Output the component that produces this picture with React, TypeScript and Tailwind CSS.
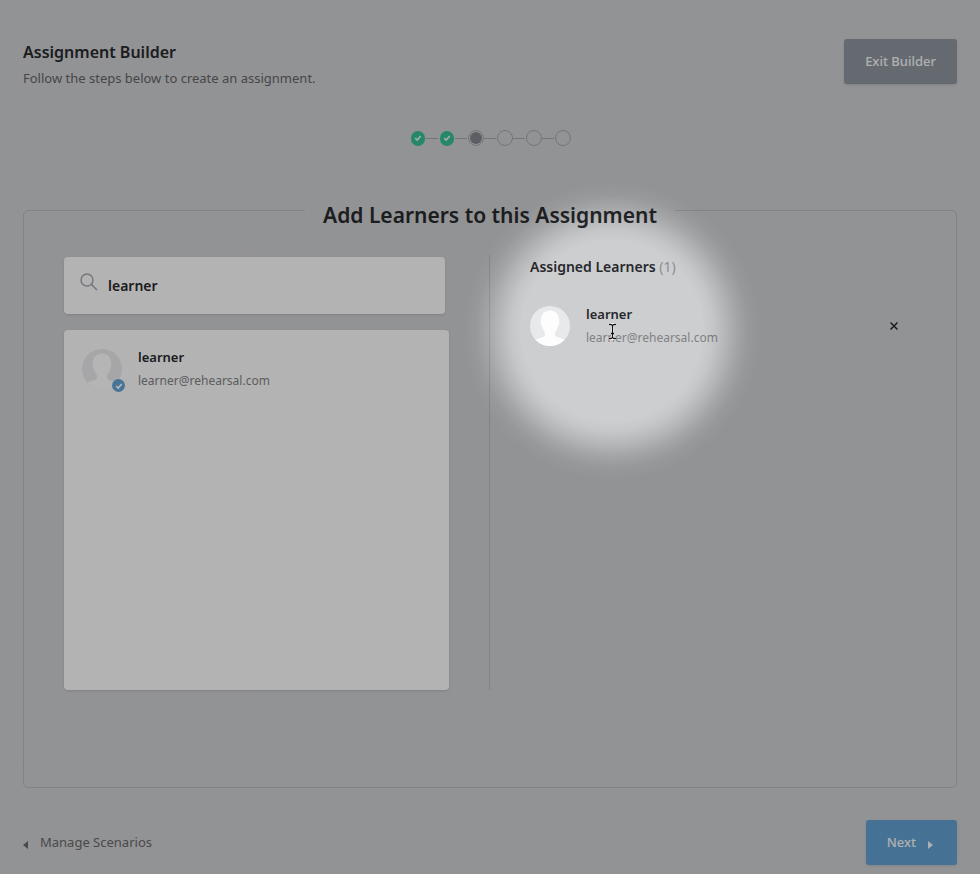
import { useState } from "react";

const steps = ["done", "done", "current", "todo", "todo", "todo"];

function Check({ className }: { className: string }) {
  return (
    <svg viewBox="0 0 16 16" className={className} fill="none" stroke="currentColor" strokeWidth="3.4">
      <path d="M2.500 8.200l3.900 3.800L13.500 4" />
    </svg>
  );
}

function Avatar() {
  return (
    <svg viewBox="0 0 40 40" className="block size-10 rounded-full" aria-hidden="true">
      <rect width="40" height="40" fill="#e8e9eb" />
      <path
        fill="#fdfdfd"
        d="M20 4.500c5.600 0 9 3.600 9 9.200 0 1 .6 1.600.3 3.200-.3 1.300-.8 1.800-1.100 2.900-.6 3-2 5-3.200 6.600v2.300c0 1.500 1.500 2.100 4.500 3.100 3 .9 5.500 1.700 7.500 3.600V40h-34v-4.600c2-1.900 4.500-2.700 7.500-3.600 3-1 4.500-1.600 4.500-3.100v-2.300c-1.200-1.600-2.600-3.600-3.200-6.600-.3-1.100-.8-1.600-1.100-2.900-.3-1.600.3-2.200.3-3.200 0-5.600 3.400-9.200 9-9.200z"
      />
    </svg>
  );
}

function Steps() {
  return (
    <ol className="flex items-center justify-center" aria-label="Progress">
      {steps.map((step, i) => (
        <li key={i} className="flex items-center">
          {i > 0 && <span className="h-px w-3 bg-[#a3a4a8]" />}
          <span className="flex h-4 w-[17px] items-center justify-center">
            {step === "done" && (
              <span className="flex h-[15px] w-3.5 items-center justify-center rounded-full bg-[#36be92] text-[#e4f3ee]">
                <Check className="size-2" />
              </span>
            )}
            {step === "current" && (
              <span className="flex size-4 items-center justify-center rounded-full border border-[#a3a4a8]">
                <span className="size-3 rounded-full bg-[#83848c]" />
              </span>
            )}
            {step === "todo" && <span className="size-4 rounded-full border border-[#a3a4a8]" />}
          </span>
        </li>
      ))}
    </ol>
  );
}

function Person() {
  return (
    <div>
      <p className="text-[13px] leading-6 font-semibold text-[#27282b]">learner</p>
      <p className="text-xs leading-6 text-[#7f8184]">learner@rehearsal.com</p>
    </div>
  );
}

function Spotlight() {
  return (
    <div className="pointer-events-none absolute inset-0 bg-[radial-gradient(circle_at_612px_331px,transparent_90px,rgba(0,0,0,0.04)_101px,rgba(0,0,0,0.12)_114px,rgba(0,0,0,0.20)_125px,rgba(0,0,0,0.26)_136px,rgba(0,0,0,0.285)_148px)]">
      <svg viewBox="0 0 11 17" className="absolute top-[323px] left-[607px] h-[17px] w-[11px]" fill="none">
        <path d="M2 1.500h2l1.500 1 1.500-1h2M5.500 2v13M2 15.500h2l1.500-1 1.500 1h2M4 10.500h3" stroke="#fff" strokeWidth="3" />
        <path d="M2 1.500h2l1.500 1 1.500-1h2M5.500 2v13M2 15.500h2l1.500-1 1.500 1h2M4 10.500h3" stroke="#111" strokeWidth="1.300" />
      </svg>
    </div>
  );
}

export default function App() {
  const [query, setQuery] = useState("learner");

  return (
    <div className="relative min-h-screen bg-[#cdced0] px-[23px] pt-[39px] pb-[9px] font-['Noto_Sans',sans-serif] text-[#27282b]">
      <header className="flex items-start justify-between">
        <div>
          <h1 className="text-base leading-[26px] font-semibold">Assignment Builder</h1>
          <p className="text-[13px] leading-[26px] text-[#626366]">Follow the steps below to create an assignment.</p>
        </div>
        <button className="h-[45px] rounded-[3px] bg-[#8e959f] px-[21px] text-[13px] font-medium text-[#f4f5f6] shadow-sm">
          Exit Builder
        </button>
      </header>

      <nav className="mt-[39px]">
        <Steps />
      </nav>

      <main className="mt-16 rounded-[5px] border border-[#b5b6b9] pb-[97px]">
        <div className="-mt-3 flex justify-center">
          <h2 className="bg-[#cdced0] px-[18px] text-[21px] leading-8 font-semibold">Add Learners to this Assignment</h2>
        </div>

        <div className="mt-6 grid grid-cols-2">
          <section className="border-r border-[#b5b6b9] px-10 pt-[2px]">
            <label className="mr-1 flex h-[57px] rounded-[4px] bg-[#fbfbfb] px-4 shadow">
              <svg viewBox="0 0 18 18" className="mt-4 size-[18px]" fill="none" stroke="#a3a6ac" strokeWidth="1.500">
                <circle cx="7" cy="7" r="6" />
                <path d="M11.400 11.400L17 17" />
              </svg>
              <input
                type="text"
                aria-label="Search learners"
                value={query}
                onChange={(e) => setQuery(e.target.value)}
                className="ml-2.5 min-w-0 flex-1 bg-transparent text-sm font-semibold outline-none"
              />
            </label>

            <div className="mt-4 h-[360px] rounded-[4px] bg-[#fbfbfb] px-[18px] py-[15px] shadow">
              <div className="flex gap-4">
                <div className="relative mt-1 size-10">
                  <Avatar />
                  <span className="absolute -right-[3px] -bottom-[3px] flex size-[13px] items-center justify-center rounded-full bg-[#65a3d3] text-white">
                    <Check className="size-2" />
                  </span>
                </div>
                <Person />
              </div>
            </div>
          </section>

          <section className="px-10">
            <h3 className="text-sm leading-6 font-semibold">
              Assigned Learners <span className="font-normal text-[#8b8d90]">(1)</span>
            </h3>
            <div className="mt-[23px] flex gap-4">
              <div className="mt-1">
                <Avatar />
              </div>
              <Person />
              <button aria-label="Remove learner" className="mt-4 mr-[14px] ml-auto flex size-4 items-center justify-center">
                <svg viewBox="0 0 8 8" className="size-2" stroke="currentColor" strokeWidth="1.500">
                  <path d="M.5.5l7 7M7.500.5l-7 7" />
                </svg>
              </button>
            </div>
          </section>
        </div>
      </main>

      <footer className="mt-8 flex items-center justify-between">
        <a href="#scenarios" className="flex items-center gap-3 text-[13px] text-[#66676a]">
          <svg viewBox="0 0 5 8" className="mt-1 h-2 w-[5px]" fill="currentColor">
            <path d="M5 0v8L0 4z" />
          </svg>
          Manage Scenarios
        </a>
        <button className="flex h-[45px] items-center gap-3 rounded-[3px] bg-[#609fd0] pr-6 pl-[21px] text-[13px] font-medium text-[#f4f5f6] shadow-sm">
          Next
          <svg viewBox="0 0 5 8" className="mt-1 h-2 w-[5px]" fill="currentColor">
            <path d="M0 0v8l5-4z" />
          </svg>
        </button>
      </footer>

      <Spotlight />
    </div>
  );
}
